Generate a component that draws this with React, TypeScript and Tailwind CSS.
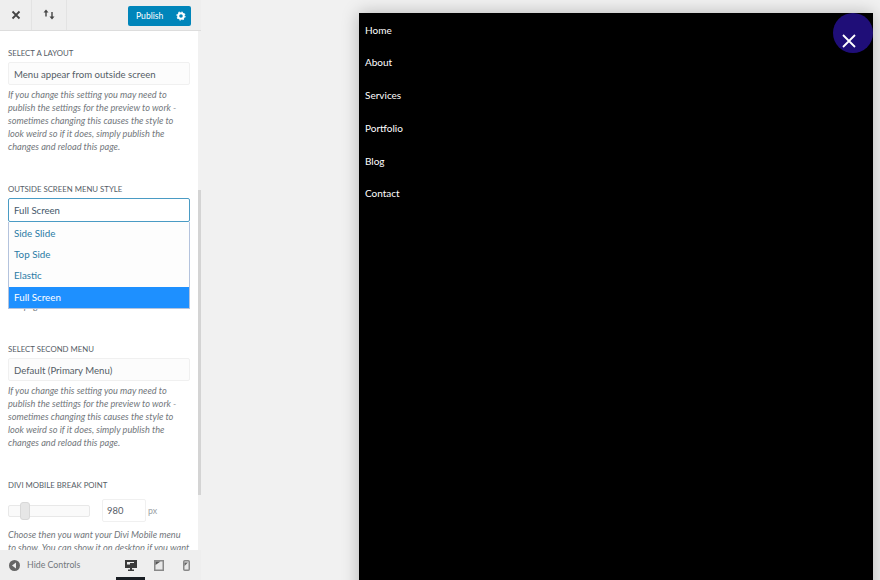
import React from "react";

const font = { fontFamily: 'Lato, "Open Sans", sans-serif' };

function Label({ children, className = "" }: { children: React.ReactNode; className?: string }) {
  return <div className={`whitespace-nowrap text-[7.800px] leading-[12px] text-[#555d66] uppercase ${className}`}>{children}</div>;
}

function Desc({ children }: { children: React.ReactNode }) {
  return <p className="mt-[3px] w-[172px] text-[9.200px] leading-[13px] italic text-[#72777c]">{children}</p>;
}

function Select({ value }: { value: string }) {
  return (
    <div className="mt-[3px] h-[23px] w-[182px] rounded-[2px] border border-[#f0f0f0] bg-[#fcfcfc] pl-[5px] text-[9.600px] leading-[23px] text-[#555d66]">
      {value}
    </div>
  );
}

const note = "If you change this setting you may need to publish the settings for the preview to work - sometimes changing this causes the style to look weird so if it does, simply publish the changes and reload this page.";

export default function App() {
  return (
    <div style={font} className="flex h-[580px] w-[880px] overflow-hidden bg-[#f1f1f1]">
      <aside className="flex w-[201px] shrink-0 flex-col bg-[#eeeeee]">
        <header className="flex h-[31px] shrink-0 items-stretch border-b border-[#dddddd] bg-[#eeeeee]">
          <div className="flex w-[32px] items-center justify-center border-r border-[#e3e3e3]">
            <svg width="10" height="10" viewBox="0 0 10 10"><path d="M1.500 1.500l7 7M8.500 1.500l-7 7" stroke="#444" strokeWidth="1.800" /></svg>
          </div>
          <div className="flex w-[35px] items-center justify-center border-r border-[#e3e3e3]">
            <svg width="14" height="12" viewBox="0 0 14 12" fill="#444">
              <path d="M4 0.500L6.500 3.500H4.700V7.500H3.300V3.500H1.500z" />
              <path d="M10 10.500L7.500 7.500H9.300V3H10.700V7.500H12.500z" />
            </svg>
          </div>
          <div className="flex flex-1 items-center justify-end pr-[10px]">
            <div className="mt-[1px] flex h-[20px] w-[63px] items-center justify-between rounded-[2px] bg-[#0085ba] pl-[8px] pr-[5px] text-[8.600px] text-white">
              <span className="pt-[2px]">Publish</span>
              <svg width="10" height="10" viewBox="0 0 10 10">
                <circle cx="5" cy="5" r="2.800" fill="none" stroke="#fff" strokeWidth="2" />
                <circle cx="5" cy="5" r="4" fill="none" stroke="#fff" strokeWidth="1.200" strokeDasharray="1.400 1.740" />
              </svg>
            </div>
          </div>
        </header>
        <div className="flex min-h-0 flex-1">
          <div className="relative w-[198px] shrink-0 overflow-hidden bg-white pl-[8px] pt-[16px]">
            <Label>Select a layout</Label>
            <Select value="Menu appear from outside screen" />
            <Desc>{note}</Desc>
            <Label className="mt-[30px]">Outside screen menu style</Label>
            <div className="mt-[3px] h-[24px] w-[182px] rounded-[2px] border border-[#4a9bc4] bg-white pl-[5px] text-[9.600px] leading-[23px] text-[#44586a]">
              Full Screen
            </div>
            <div className="h-[121px] pt-[77px] text-[9.200px] leading-[13px] italic text-[#72777c]">this page.</div>
            <Label>Select second menu</Label>
            <Select value="Default (Primary Menu)" />
            <Desc>{note}</Desc>
            <Label className="mt-[30px]">Divi mobile break point</Label>
            <div className="mt-[8px] flex items-center">
              <div className="relative h-[12px] w-[82px] rounded-[2px] border border-[#e8e8e8] bg-[#fafafa]">
                <div className="absolute left-[11px] top-[-4px] h-[18px] w-[10px] rounded-[3px] border border-[#d8d8d8] bg-[#e6e6e6]" />
              </div>
              <div className="ml-[12px] h-[23px] w-[44px] rounded-[2px] border border-[#f0f0f0] pl-[4px] text-[9.400px] leading-[21px] text-[#555d66]">980</div>
              <span className="ml-[2px] text-[8.800px] text-[#9a9fa4]">px</span>
            </div>
            <p className="mt-[6px] w-[182px] text-[9.200px] leading-[13px] italic text-[#72777c]">
              Choose then you want your Divi Mobile menu to show. You can show it on desktop if you want
            </p>
            <div className="absolute left-[8px] top-[191px] w-[182px] border border-t-0 border-[#b4c3dd] bg-[#fdfdfd] text-[9.800px]">
              <div className="pt-[1px] leading-[21.200px]">
                <div className="pl-[5px] text-[#2a7ba5]">Side Slide</div>
                <div className="pl-[5px] text-[#2a7ba5]">Top Side</div>
                <div className="pl-[5px] text-[#2a7ba5]">Elastic</div>
              </div>
              <div className="bg-[#1e90ff] pl-[5px] leading-[21.500px] text-white">Full Screen</div>
            </div>
          </div>
          <div className="flex w-[3px] shrink-0 flex-col bg-[#f1f1f1]">
            <div className="mt-[159px] h-[305px] bg-[#d4d4d4]" />
          </div>
        </div>
        <footer className="flex h-[30px] shrink-0 items-center bg-[#eeeeee]">
          <svg className="ml-[9px] shrink-0" width="11" height="11" viewBox="0 0 11 11">
            <circle cx="5.500" cy="5.500" r="5.500" fill="#666" />
            <path d="M7 2.500v6L3 5.500z" fill="#eee" />
          </svg>
          <span className="ml-[7px] w-[89px] shrink-0 whitespace-nowrap text-[8.800px] text-[#72777c]">Hide Controls</span>
          <div className="relative flex h-full w-[29px] shrink-0 items-center justify-center">
            <svg width="12" height="11" viewBox="0 0 12 11">
              <path d="M0 0h12v8H0z" fill="#3a3a3a" />
              <path d="M2 2h7v1H5v1.500H2z" fill="#eee" />
              <path d="M5 8h2v1.500h2V11H3V9.500h2z" fill="#3a3a3a" />
            </svg>
            <div className="absolute bottom-0 left-0 h-[3px] w-full bg-[#191e23]" />
          </div>
          <div className="flex w-[27px] shrink-0 items-center justify-center pt-[1px]">
            <svg width="10" height="11" viewBox="0 0 10 11">
              <rect x="0.750" y="0.750" width="8.500" height="9.500" fill="#e8e8e8" stroke="#888" strokeWidth="1.500" />
              <path d="M1.500 1.500h5L1.500 5z" fill="#555" />
            </svg>
          </div>
          <div className="flex w-[29px] shrink-0 items-center justify-center pt-[1px]">
            <svg width="7" height="11" viewBox="0 0 7 11">
              <rect x="0.750" y="0.750" width="5.500" height="9.500" rx="1" fill="#e8e8e8" stroke="#888" strokeWidth="1.500" />
              <path d="M1.500 2.500h3.500L1.500 6z" fill="#666" />
            </svg>
          </div>
        </footer>
      </aside>
      <main className="min-w-0 flex-1 pl-[158px] pr-[7px] pt-[13px]">
        <div className="relative h-[640px] bg-black shadow-[0_0_16px_rgba(0,0,0,0.25)]">
          <nav className="flex flex-col gap-[16.800px] pl-[6px] pt-[8.500px] text-[10px] leading-[16px] text-white">
            <a>Home</a>
            <a>About</a>
            <a>Services</a>
            <a>Portfolio</a>
            <a>Blog</a>
            <a>Contact</a>
          </nav>
          <div className="absolute right-0 top-0 h-[40px] w-[40px] rounded-full bg-[#1f0e78] pl-[8px] pt-[20px]">
            <svg width="16" height="16" viewBox="0 0 16 16">
              <path d="M2 2l12 12M14 2L2 14" stroke="#fff" strokeWidth="1.800" />
            </svg>
          </div>
        </div>
      </main>
    </div>
  );
}
